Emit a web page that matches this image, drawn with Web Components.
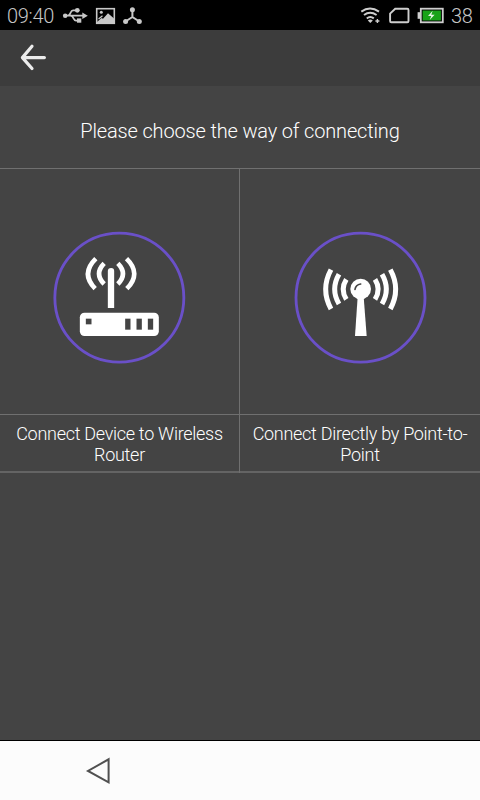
<!DOCTYPE html>
<html lang="en">
<head>
<meta charset="utf-8">
<title>Connect</title>
<style>
    html, body {
        margin: 0;
        height: 100%;
        background: #444;
        font-family: Roboto, "Liberation Sans", sans-serif;
        font-weight: 300;
        color: #fff;
    }
</style>
</head>
<body>
<connect-screen></connect-screen>

<script>
class BaseElement extends HTMLElement {
    constructor() {
        super();
        this.attachShadow( { mode: 'open' } );
    }

    render() {
        const template = document.createElement( 'template' );
        template.innerHTML = `<style>${this.getStyles()}</style>${this.getTemplate()}`;
        this.shadowRoot.appendChild( template.content.cloneNode( true ) );
    }

    connectedCallback() {
        if ( !this.shadowRoot.firstChild ) this.render();
    }
}

class StatusBar extends BaseElement {
    getStyles() {
        return `
            :host {
                display: flex;
                justify-content: space-between;
                height: 30px;
                background: #000;
                color: #c6c6c6;
                font-size: 20px;
                line-height: 32px;
            }
            .group { display: flex; }
            .time { padding-left: 7px; width: 48px; white-space: nowrap; letter-spacing: -0.3px; }
            .level { width: 29px; padding-left: 1px; white-space: nowrap; letter-spacing: -0.3px; }
            svg { display: block; }
        `
    }

    getTemplate() {
        return `
            <div class="group">
                <span class="time">09:40</span>
                <svg width="95" height="30" viewBox="55 0 95 30" fill="#c8c8c8" stroke="#c8c8c8">
                    <g stroke-width="1.7" fill="none">
                        <path d="M65 15.7H83M67.5 15.7C71 15.7 70 10.3 73 10.3H77M70.5 15.7C74 15.7 73 20.6 76 20.6H79"/>
                    </g>
                    <g stroke="none">
                        <circle cx="65.2" cy="15.7" r="2.3"/>
                        <path d="M82.3 12.5V18.9L87.8 15.7Z"/>
                        <circle cx="77.3" cy="10.3" r="2.4"/>
                        <rect x="77" y="18.4" width="4.3" height="4.3"/>
                    </g>
                    <rect x="96.7" y="8.7" width="17.6" height="14.6" fill="none" stroke-width="1.6"/>
                    <path d="M97 22L101.5 18L103 18.8L108 13.2L114 18.5V23H97Z" stroke="none"/>
                    <circle cx="101.3" cy="12.3" r="1.5" stroke="none"/>
                    <path d="M98.5 19L102.5 15.8" stroke-width="1.3"/>
                    <path d="M132.4 10V17M132.4 17L125.5 21.5M132.4 17L139.3 21.5" fill="none" stroke-width="2"/>
                    <g stroke="none">
                        <circle cx="132.4" cy="9.7" r="2.5"/>
                        <circle cx="125.6" cy="21.5" r="2.5"/>
                        <circle cx="139.3" cy="21.5" r="2.5"/>
                    </g>
                </svg>
            </div>
            <div class="group">
                <svg width="91" height="30" viewBox="359 0 91 30" fill="none" stroke="#cecece">
                    <path d="M361.3 11.6Q370 5.4 379 11.6" stroke-width="2"/>
                    <path d="M364 15Q370 10.5 376.6 15" stroke-width="2"/>
                    <path d="M366.8 18.4Q370.2 15.6 373.8 18.4" stroke-width="2"/>
                    <path d="M367.8 20.4Q370.3 18.7 372.8 20.4L370.3 23Z" fill="#cecece" stroke="none"/>
                    <path d="M377.4 19V23M375.4 21H379.4" stroke-width="1.4"/>
                    <path d="M395.2 8.7H407.3Q408.5 8.7 408.5 10V20.9Q408.5 22.2 407.3 22.2H391.3Q390.1 22.2 390.1 20.9V13.6Z" stroke-width="1.9"/>
                    <rect x="420.8" y="8.7" width="22" height="13.6" stroke-width="1.8"/>
                    <rect x="417.6" y="12.2" width="2.5" height="6.6" fill="#cecece" stroke="none"/>
                    <rect x="422.6" y="10.5" width="18.3" height="10" fill="#18a318" stroke="none"/>
                    <path d="M432.7 10.8L428 16H431.2L429.7 20L434.6 14.8H431.3Z" fill="#e8f5e8" stroke="none"/>
                </svg>
                <span class="level">38</span>
            </div>
        `
    }
}

class TitleBar extends BaseElement {
    getStyles() {
        return `
            :host {
                display: flex;
                align-items: center;
                box-sizing: border-box;
                height: 56px;
                padding-left: 18px;
                background: #3c3c3c;
            }
        `
    }

    getTemplate() {
        return `
            <svg width="30" height="30" viewBox="0 0 30 30" fill="none" stroke="#ececec" stroke-width="3.2" stroke-linecap="round" stroke-linejoin="round">
                <path d="M14 3.3L4.4 14.6L14 25.5M4.8 14.6H26.4"/>
            </svg>
        `
    }
}

class ConnectOption extends BaseElement {
    getStyles() {
        return `
            :host {
                display: flex;
                flex-direction: column;
                border-right: 1px solid #707070;
            }
            :host(:last-child) { border-right: 0; }
            .picture {
                display: flex;
                justify-content: center;
                box-sizing: border-box;
                height: 245px;
                padding-top: 62px;
            }
            .label {
                box-sizing: border-box;
                height: 59px;
                padding: 8px 8px 0;
                border-top: 1px solid #707070;
                border-bottom: 2px solid #646464;
                font-size: 18px;
                line-height: 21px;
                letter-spacing: -0.29px;
                text-align: center;
            }
        `
    }

    getTemplate() {
        return `
            <div class="picture"><slot name="icon"></slot></div>
            <div class="label"><slot></slot></div>
        `
    }
}

class RouterIcon extends BaseElement {
    getStyles() {
        return `
            :host { display: block; width: 134px; height: 134px; }
            svg { display: block; }
        `
    }

    getTemplate() {
        return `
            <svg width="134" height="134" viewBox="39.5 33 402 402" fill="none">
                <circle cx="238.5" cy="233" r="193.5" stroke="#6a50c8" stroke-width="8.5"/>
                <g stroke="#fff" stroke-width="14">
                    <path d="M168 116Q122 161 166 206"/>
                    <path d="M193 130Q162 161 193 192"/>
                    <path d="M234 130Q265 161 234 192"/>
                    <path d="M260 116Q306 161 261 206"/>
                </g>
                <path d="M204 264V153Q204 144 214 144Q223 144 223 153V264Z" fill="#fff"/>
                <rect x="120" y="278" width="237" height="70" rx="14" fill="#fff"/>
                <g fill="#444">
                    <rect x="138" y="296" width="17" height="17"/>
                    <rect x="256" y="296" width="16" height="33"/>
                    <rect x="290" y="296" width="16" height="33"/>
                    <rect x="324" y="296" width="16" height="33"/>
                </g>
            </svg>
        `
    }
}

class AntennaIcon extends BaseElement {
    getStyles() {
        return `
            :host { display: block; width: 134px; height: 134px; }
            svg { display: block; }
        `
    }

    getTemplate() {
        return `
            <svg width="134" height="134" viewBox="39 33 402 402" fill="none">
                <circle cx="241.5" cy="233" r="193.5" stroke="#6a50c8" stroke-width="8.5"/>
                <g stroke="#fff" stroke-width="15">
                    <path d="M153 149Q121 208 153 267"/>
                    <path d="M177 163Q151 208 177 252"/>
                    <path d="M199 178Q180 208 199 238"/>
                    <path d="M285 178Q304 208 285 238"/>
                    <path d="M306 163Q332 208 306 252"/>
                    <path d="M331 149Q363 208 331 267"/>
                </g>
                <circle cx="242" cy="207" r="31" fill="#fff"/>
                <path d="M233 230H251L260 348H225Z" fill="#fff"/>
                <path d="M225 208Q227 195 242 192" stroke="#444" stroke-width="5" stroke-linecap="round"/>
            </svg>
        `
    }
}

class NavBar extends BaseElement {
    getStyles() {
        return `
            :host {
                display: flex;
                align-items: center;
                box-sizing: border-box;
                height: 60px;
                padding-left: 84px;
                border-top: 1px solid #000;
                background: #fcfcfc;
            }
        `
    }

    getTemplate() {
        return `
            <svg width="30" height="30" viewBox="84 756 30 30" fill="none" stroke="#505050" stroke-width="2">
                <path d="M108.6 759.3V782.3L88 771Z"/>
            </svg>
        `
    }
}

class ConnectScreen extends BaseElement {
    getStyles() {
        return `
            :host {
                display: flex;
                flex-direction: column;
                width: 480px;
                height: 800px;
                background: #444;
            }
            .prompt {
                box-sizing: border-box;
                height: 83px;
                padding-top: 33px;
                border-bottom: 1px solid #707070;
                font-size: 20px;
                line-height: 24px;
                letter-spacing: -0.16px;
                text-align: center;
            }
            .options {
                display: grid;
                grid-template-columns: 240px 240px;
                flex: 1;
                align-content: start;
            }
        `
    }

    getTemplate() {
        return `
            <status-bar></status-bar>
            <title-bar></title-bar>
            <div class="prompt">Please choose the way of connecting</div>
            <div class="options">
                <connect-option>
                    <router-icon slot="icon"></router-icon>
                    Connect Device to Wireless Router
                </connect-option>
                <connect-option>
                    <antenna-icon slot="icon"></antenna-icon>
                    Connect Directly by Point-to-Point
                </connect-option>
            </div>
            <nav-bar></nav-bar>
        `
    }
}

customElements.define( 'status-bar', StatusBar );
customElements.define( 'title-bar', TitleBar );
customElements.define( 'connect-option', ConnectOption );
customElements.define( 'router-icon', RouterIcon );
customElements.define( 'antenna-icon', AntennaIcon );
customElements.define( 'nav-bar', NavBar );
customElements.define( 'connect-screen', ConnectScreen );
</script>
</body>
</html>
